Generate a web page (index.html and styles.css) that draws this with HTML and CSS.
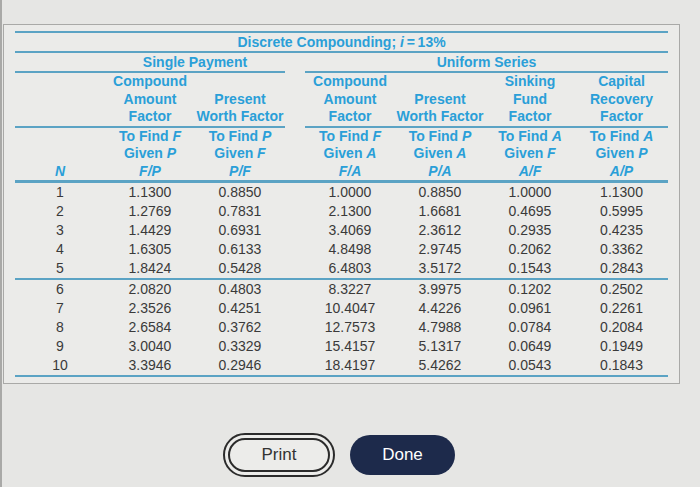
FILE: index.html
```html
<!DOCTYPE html>
<html lang="en">
<head>
<meta charset="utf-8">
<title>Discrete Compounding i = 13%</title>
<link rel="stylesheet" href="styles.css">
</head>
<body>
<div class="panel">
  <table class="factors">
    <colgroup>
      <col class="c-n"><col class="c-v"><col class="c-v"><col class="c-gap"><col class="c-v"><col class="c-v"><col class="c-v"><col class="c-last">
    </colgroup>
    <thead>
      <tr class="r-title"><th colspan="8">Discrete Compounding; <i>i</i>&#8201;=&#8201;13%</th></tr>
      <tr class="r-group">
        <th class="rule"></th>
        <th colspan="2" class="rule">Single Payment</th>
        <th></th>
        <th colspan="4" class="rule">Uniform Series</th>
      </tr>
      <tr class="r-name">
        <th class="rule"></th>
        <th class="rule">Compound<br>Amount<br>Factor</th>
        <th class="rule">Present<br>Worth Factor</th>
        <th></th>
        <th class="rule">Compound<br>Amount<br>Factor</th>
        <th class="rule">Present<br>Worth Factor</th>
        <th class="rule">Sinking<br>Fund<br>Factor</th>
        <th class="rule">Capital<br>Recovery<br>Factor</th>
      </tr>
      <tr class="r-find">
        <th><i>N</i></th>
        <th>To Find <i>F</i><br>Given <i>P</i><br><i>F/P</i></th>
        <th>To Find <i>P</i><br>Given <i>F</i><br><i>P/F</i></th>
        <th></th>
        <th>To Find <i>F</i><br>Given <i>A</i><br><i>F/A</i></th>
        <th>To Find <i>P</i><br>Given <i>A</i><br><i>P/A</i></th>
        <th>To Find <i>A</i><br>Given <i>F</i><br><i>A/F</i></th>
        <th>To Find <i>A</i><br>Given <i>P</i><br><i>A/P</i></th>
      </tr>
    </thead>
    <tbody>
      <tr><td>1</td><td>1.1300</td><td>0.8850</td><td></td><td>1.0000</td><td>0.8850</td><td>1.0000</td><td>1.1300</td></tr>
      <tr><td>2</td><td>1.2769</td><td>0.7831</td><td></td><td>2.1300</td><td>1.6681</td><td>0.4695</td><td>0.5995</td></tr>
      <tr><td>3</td><td>1.4429</td><td>0.6931</td><td></td><td>3.4069</td><td>2.3612</td><td>0.2935</td><td>0.4235</td></tr>
      <tr><td>4</td><td>1.6305</td><td>0.6133</td><td></td><td>4.8498</td><td>2.9745</td><td>0.2062</td><td>0.3362</td></tr>
      <tr class="r-break"><td>5</td><td>1.8424</td><td>0.5428</td><td></td><td>6.4803</td><td>3.5172</td><td>0.1543</td><td>0.2843</td></tr>
      <tr><td>6</td><td>2.0820</td><td>0.4803</td><td></td><td>8.3227</td><td>3.9975</td><td>0.1202</td><td>0.2502</td></tr>
      <tr><td>7</td><td>2.3526</td><td>0.4251</td><td></td><td>10.4047</td><td>4.4226</td><td>0.0961</td><td>0.2261</td></tr>
      <tr><td>8</td><td>2.6584</td><td>0.3762</td><td></td><td>12.7573</td><td>4.7988</td><td>0.0784</td><td>0.2084</td></tr>
      <tr><td>9</td><td>3.0040</td><td>0.3329</td><td></td><td>15.4157</td><td>5.1317</td><td>0.0649</td><td>0.1949</td></tr>
      <tr class="r-break"><td>10</td><td>3.3946</td><td>0.2946</td><td></td><td>18.4197</td><td>5.4262</td><td>0.0543</td><td>0.1843</td></tr>
    </tbody>
  </table>
</div>
<div class="actions">
  <button class="btn btn-print" type="button">Print</button>
  <button class="btn btn-done" type="button">Done</button>
</div>
</body>
</html>
```
FILE: styles.css
```css
html, body {
  margin: 0;
  padding: 0;
}
body {
  background: #e6e6e4;
  font-family: "Liberation Sans", Arial, sans-serif;
  width: 700px;
  height: 487px;
  overflow: hidden;
  box-shadow: inset 2px 0 0 #a9a9a7;
}
.panel {
  margin: 24px 0 0 3px;
  width: 664px;
  padding: 6px 0 6px 11px;
  border: 1px solid #a9a9a7;
  background: #ebebe9;
}
.factors {
  table-layout: fixed;
  border-collapse: separate;
  border-spacing: 0;
  width: 653px;
}
.c-n, .c-v { width: 90px; }
.c-gap { width: 20px; }
.c-last { width: 93px; }
.factors th {
  color: #2a9fd8;
  font-weight: bold;
  font-size: 14px;
  padding: 0;
  text-align: center;
  vertical-align: bottom;
  white-space: nowrap;
}
.r-title th {
  line-height: 18px;
  border-top: 2px solid #5ba3c4;
  border-bottom: 2px solid #5ba3c4;
}
.r-group th {
  line-height: 18px;
}
.r-name th {
  line-height: 17.5px;
}
.factors th.rule {
  border-bottom: 2px solid #5ba3c4;
}
.r-find th {
  line-height: 17.5px;
  border-bottom: 3px solid #5ba3c4;
}
.factors td {
  padding: 0;
  text-align: center;
  font-size: 14px;
  line-height: 19px;
  color: #3a3a3a;
}
.r-break td {
  border-bottom: 2px solid #5ba3c4;
}
.actions {
  display: flex;
  justify-content: center;
  align-items: center;
  gap: 15px;
  width: 672px;
  margin: 49px 0 0 3px;
}
.btn {
  font-family: "Liberation Sans", Arial, sans-serif;
  font-size: 17px;
  border-radius: 22px;
  padding: 0;
  margin: 0;
  cursor: pointer;
}
.btn-print {
  width: 112px;
  height: 44px;
  border: 7px double #2b2b2b;
  background: #ececea;
  color: #333;
}
.btn-done {
  width: 105px;
  height: 40px;
  border: none;
  background: #1d2a4b;
  color: #fff;
}
```
